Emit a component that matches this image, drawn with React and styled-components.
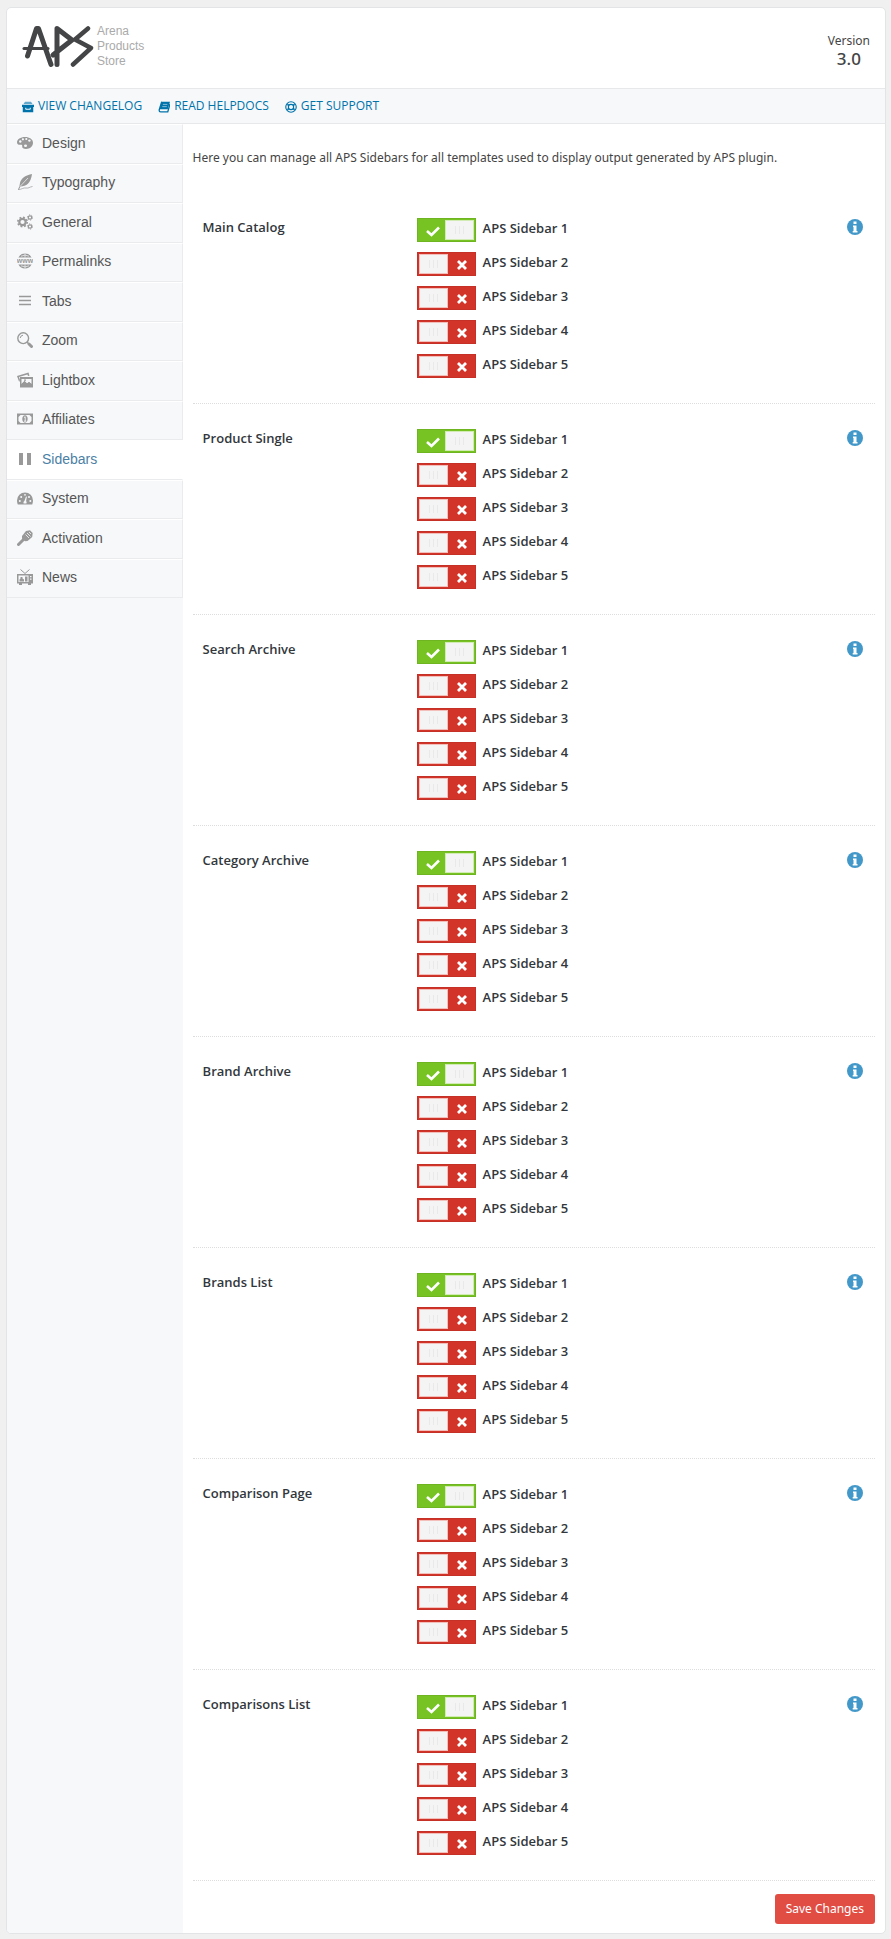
import React, { useState } from "react";
import styled, { createGlobalStyle, css } from "styled-components";

const GlobalStyle = createGlobalStyle`
  * {
    box-sizing: border-box;
  }
  body {
    margin: 0;
    background: #f0f0f0;
    color: #444;
    font-family: "Noto Sans", "Open Sans", sans-serif;
    font-size: 12px;
    line-height: 20px;
  }
`;

const Panel = styled.div`
  margin: 7px 5px 5px 6px;
  background: #fff;
  border: 1px solid #e2e4e6;
  border-radius: 5px;
  overflow: hidden;
`;

const Header = styled.header`
  display: flex;
  justify-content: space-between;
  align-items: flex-start;
  height: 81px;
  padding: 16px 15px 0;
  border-bottom: 1px solid #e6e8ea;
`;

const Brand = styled.div`
  display: flex;
  gap: 2px;
`;

const BrandName = styled.div`
  color: #aaa;
  font: 12px/15px "Liberation Sans", Arial, sans-serif;
`;

const Version = styled.div`
  padding-top: 7px;
  text-align: center;
`;

const VersionNumber = styled.strong`
  display: block;
  font-size: 17px;
  font-weight: 500;
  line-height: 16px;
`;

const TopNav = styled.nav`
  display: flex;
  align-items: center;
  gap: 16px;
  height: 35px;
  padding: 0 15px;
  background: #f6f8fa;
  border-bottom: 1px solid #e6e8ea;
`;

const TopLink = styled.a`
  display: flex;
  align-items: center;
  gap: 4px;
  color: #0073aa;
  font-family: "Open Sans", sans-serif;
  text-decoration: none;
  text-transform: uppercase;

  svg {
    width: 12px;
    height: 12px;
    margin-top: 2px;
  }
`;

const Body = styled.div`
  display: flex;
`;

const Sidebar = styled.aside`
  flex: 0 0 20%;
  background: #f6f8fa;
`;

const Menu = styled.ul`
  display: grid;
  grid-auto-rows: 1fr;
  min-height: 474px;
  margin: 0;
  padding: 0;
  list-style: none;
`;

const MenuItem = styled.li`
  display: flex;
  border-top: 1px solid #fff;
  border-bottom: 1px solid #e9ebed;
  border-right: 1px solid #e9ebed;
  ${({ $active }) => $active && css`
    background: #fff;
    border-right-color: #fff;
  `}
`;

const MenuLink = styled.a`
  flex: 1;
  display: flex;
  align-items: center;
  gap: 9px;
  padding: 0 10px 2px;
  color: ${({ $active }) => ($active ? "#4b7fa5" : "#555")};
  font: 14px/18px "Liberation Sans", Arial, sans-serif;
  text-decoration: none;

  svg {
    width: 16px;
    height: 16px;
    color: #999;
  }
`;

const Content = styled.form`
  flex: 1;
  min-width: 0;
  padding: 24px 10px 9px;
`;

const Intro = styled.p`
  margin: 0 0 25px;
`;

const Section = styled.fieldset`
  display: grid;
  grid-template-columns: 214px 1fr auto;
  align-items: start;
  margin: 0;
  padding: 25px 12px 25px 10px;
  border: 0;
  border-bottom: 1px dotted #ddd;
`;

const SectionTitle = styled.h3`
  margin: 0;
  color: #32373c;
  font-family: "Open Sans", sans-serif;
  font-size: 13px;
  font-weight: 600;
  line-height: 18px;
`;

const Options = styled.div`
  display: grid;
  gap: 10px;
`;

const Option = styled.label`
  display: flex;
  gap: 7px;
  height: 24px;
  justify-self: start;
  color: #32373c;
  font-family: "Open Sans", sans-serif;
  font-size: 13px;
  font-weight: 600;
  cursor: pointer;
`;

const Checkbox = styled.input`
  position: absolute;
  opacity: 0;
  margin: 0;
`;

const Track = styled.span`
  display: flex;
  flex-direction: ${({ $on }) => ($on ? "row-reverse" : "row")};
  width: 59px;
  height: 24px;
  padding: 1px;
  border: 1px solid ${({ $on }) => ($on ? "#6fb522" : "#c63127")};
  background: ${({ $on }) => ($on ? "#76c323" : "#d3342a")};

  input:focus-visible + & {
    outline: 2px solid #5b9dd9;
  }
`;

const Knob = styled.span`
  display: flex;
  justify-content: center;
  align-items: center;
  gap: 3px;
  width: 29px;
  border: 1px solid ${({ $on }) => ($on ? "#d2ebb4" : "#f2bfbb")};
  background: #f4f4f4;
`;

const Grip = styled.i`
  width: 1px;
  height: 8px;
  background: #e9e9e9;
`;

const Mark = styled.span`
  flex: 1;
  display: flex;
  justify-content: center;
  align-items: center;
  padding-top: 2px;
  padding-left: 2px;
`;

const InfoButton = styled.button`
  width: 16px;
  height: 16px;
  margin-top: 1px;
  padding: 0;
  border: 0;
  background: none;
  cursor: pointer;

  svg {
    display: block;
  }
`;

const Actions = styled.div`
  display: flex;
  justify-content: flex-end;
  padding-top: 13px;
`;

const SaveButton = styled.button`
  height: 30px;
  padding: 0 11px;
  border: 0;
  border-radius: 3px;
  background: #e14d43;
  color: #fff;
  font: inherit;
  cursor: pointer;
`;

const Svg = ({ children, ...rest }) => (
  <svg width="16" height="16" viewBox="0 0 16 16" fill="currentColor" aria-hidden="true" {...rest}>
    {children}
  </svg>
);

const Logo = () => (
  <svg width="73" height="43" viewBox="0 0 73 43" fill="none" stroke="#444547" strokeWidth="5" strokeLinecap="round" strokeLinejoin="round" role="img" aria-label="APS">
    <path d="M5.500 32 L14.500 4.500 H16.500 L29 40.500" />
    <path d="M2 24.500H26" strokeWidth="3" />
    <path d="M35 40.500V4.500L50 16L31 31" />
    <path d="M66 4.500L53 15.500L69 24L51 40.500" strokeWidth="4.500" />
  </svg>
);

const BoxIcon = () => (
  <Svg>
    <path d="M4 1h8l2 3H2z" opacity=".6" />
    <path d="M0 5h16v3H0zM1 8h14v7H1z" />
    <path d="M5 9v2h6V9" fill="none" stroke="#fff" strokeWidth="1.300" />
  </Svg>
);

const BookIcon = () => (
  <Svg>
    <path d="M5 1h11l-3 10H2z" />
    <path d="M5 1 1.500 12q0 2.500 2 2.500H13L16 4" fill="none" stroke="currentColor" strokeWidth="1.800" />
    <path d="M6.500 4.500h6M5.700 7.500h6" stroke="#fff" strokeWidth="1" opacity=".7" />
  </Svg>
);

const LifebuoyIcon = () => (
  <Svg fill="none" stroke="currentColor">
    <circle cx="8" cy="8" r="7" strokeWidth="1.500" />
    <circle cx="8" cy="8" r="3.500" strokeWidth="1.500" />
    <path d="m3 4.500 2.500 1.500M3 11.500l2.500-1.500M13 4.500 10.500 6M13 11.500 10.500 10" strokeWidth="2" />
  </Svg>
);

const PaletteIcon = () => (
  <Svg>
    <path d="M8 2C3.500 2 0 4.300 0 7.200c0 2 1.800 2.900 3.300 2.600 1.500-.3 2.200.2 1.900 1.500C4.900 13 6.500 14 9 14c4 0 7-2.500 7-6.200C16 4.200 12.500 2 8 2z" />
    <g fill="#f6f8fa">
      <circle cx="3.300" cy="6.500" r="1.200" />
      <circle cx="5.900" cy="4.300" r="1.100" />
      <circle cx="9.300" cy="4" r="1.100" />
      <circle cx="12.400" cy="5.600" r="1.200" />
      <ellipse cx="8.500" cy="10.800" rx="1.500" ry="1.300" />
    </g>
  </Svg>
);

const CogsIcon = () => (
  <Svg fill="none" stroke="currentColor">
    <circle cx="5.500" cy="8" r="3.200" strokeWidth="2.200" />
    <circle cx="5.500" cy="8" r="4.700" strokeWidth="1.600" strokeDasharray="1.850 1.840" />
    <circle cx="13" cy="3.500" r="1.700" strokeWidth="1.200" />
    <circle cx="13" cy="3.500" r="2.600" strokeWidth="1" strokeDasharray="1.200 1.520" />
    <circle cx="13" cy="12.500" r="1.700" strokeWidth="1.200" />
    <circle cx="13" cy="12.500" r="2.600" strokeWidth="1" strokeDasharray="1.200 1.520" />
  </Svg>
);

const GaugeIcon = () => (
  <Svg>
    <path d="M8 2.500a8 8 0 0 0-8 8c0 1.600.3 2.700.8 4h14.400c.5-1.300.8-2.400.8-4a8 8 0 0 0-8-8z" />
    <g fill="#f6f8fa">
      <circle cx="2.800" cy="11" r="1" />
      <circle cx="4.200" cy="7" r="1" />
      <circle cx="8" cy="4.800" r=".9" />
      <circle cx="12" cy="7" r="1" />
      <circle cx="13.300" cy="11" r="1" />
      <path d="m9 6.500.9.300-.8 4.200q1 1 .3 2.500H6.600q-.7-1.800.9-2.700z" />
    </g>
  </Svg>
);

const QuillIcon = () => (
  <Svg>
    <path d="M15 0C9 1 4 4 3 9l-.6 3.300L1 15.500l.8.2 1.700-3.200C9 12.500 14 9 15 0z" />
    <path d="M3 12.500 11 4" stroke="#f6f8fa" strokeWidth=".7" />
    <path d="M1 15.700c4-.2 5-2.200 8-1.700s3-1 6.500-1.500" fill="none" stroke="currentColor" strokeWidth=".7" />
  </Svg>
);

const WwwIcon = () => (
  <Svg>
    <path d="M1.400 4.500a7.500 7.500 0 0 1 13.200 0zM1.400 11.500a7.500 7.500 0 0 0 13.200 0z" />
    <path d="M4 3.200Q8 1 12 3.200M4 12.800Q8 15 12 12.800M8 .5v4M8 11.500v4" stroke="#f6f8fa" strokeWidth=".7" fill="none" />
    <text x="8" y="10" fontSize="7" fontWeight="700" fontFamily="Liberation Sans" textAnchor="middle">www</text>
  </Svg>
);

const MenuIcon = () => (
  <Svg>
    <path d="M2 3.500h12M2 7.500h12M2 11.500h12" stroke="currentColor" strokeWidth="1.500" />
  </Svg>
);

const SearchIcon = () => (
  <Svg fill="none" stroke="currentColor">
    <circle cx="6.200" cy="6.200" r="5.400" strokeWidth="1.400" />
    <path d="M3.200 6Q3.500 3.500 6 3.200" />
    <path d="m10 10 1.500 1.500" strokeWidth="1.500" />
    <path d="m12 12 2.500 2.500" strokeWidth="3" strokeLinecap="round" />
  </Svg>
);

const ImagesIcon = () => (
  <Svg>
    <path d="M0 4 11.500.5l1 3.200-1.500.3-.6-1.500L2 5l1 3-.8 2z" />
    <path d="M3 5h13v10.500H3zM4.500 7v5l3-3 2.500 2.500 2-1.500 2.500 2V7z" fillRule="evenodd" />
    <path d="M7 7.500h2v1.300H7zM4.500 12l3-3 2.500 2.500 2-1.500 2.500 2v2h-10z" />
  </Svg>
);

const MoneyIcon = () => (
  <Svg>
    <path d="M0 2.500h16v11H0zM3.500 4 1.500 6v4l2 2h9l2-2V6l-2-2z" fillRule="evenodd" />
    <path d="M8 4.300c3.600 0 3.600 7.400 0 7.400s-3.600-7.400 0-7.400z" />
    <path d="M7 6.500 8.200 5.800v4.400M7 10.200h2.300" fill="none" stroke="#f6f8fa" strokeWidth=".9" />
  </Svg>
);

const PauseIcon = () => (
  <Svg>
    <path d="M2 2h4v12H2zM10 2h4v12h-4z" />
  </Svg>
);

const KeyIcon = () => (
  <Svg>
    <path d="m1.500 14.500 6-6" stroke="currentColor" strokeWidth="3" strokeLinecap="round" />
    <path d="M5 6 9 1 13 .3 15.700 3l-.5 4-4.700 4-2.500.300L5 8.500z" />
    <path d="M8.500 4.500 12 8M10 3l3.500 3.500M12 2l2 2" stroke="#f6f8fa" strokeWidth=".8" />
  </Svg>
);

const TvIcon = () => (
  <Svg>
    <path d="m3.500.5 4.500 4 4.500-4" fill="none" stroke="currentColor" />
    <path d="M0 5h16v9.500H0zM1.500 6.500V13h10V6.500zM13 7v1.200h1.500V7zm0 2.500v1.200h1.500V9.500z" fillRule="evenodd" />
    <path d="M2.500 12.500v-2l1-1V8h2v1.500l1.500 1v2zM8 7.500h2.500v5H8zM2 14h3v2H2zM11 14h3v2h-3z" />
  </Svg>
);

const InfoIcon = () => (
  <Svg>
    <circle cx="8" cy="8" r="8" fill="#4298c9" />
    <path d="M6.500 2.500h3v2.500h-3zM6 6.500h3.500V12h1v1.500H5.700V12h.8V8H6z" fill="#fff" />
  </Svg>
);

const CheckMark = () => (
  <svg width="14" height="11" viewBox="0 0 14 11" fill="none" stroke="#fff" strokeWidth="2.600" aria-hidden="true">
    <path d="M1 5 5.500 9 13 1.500" />
  </svg>
);

const CrossMark = () => (
  <svg width="10" height="10" viewBox="0 0 10 10" stroke="#fff" strokeWidth="2.800" aria-hidden="true">
    <path d="m1 1 8 8M9 1 1 9" />
  </svg>
);

const topLinks = [
  { label: "View Changelog", icon: BoxIcon },
  { label: "Read Helpdocs", icon: BookIcon },
  { label: "Get Support", icon: LifebuoyIcon },
];

const menu = [
  { label: "Design", icon: PaletteIcon },
  { label: "Typography", icon: QuillIcon },
  { label: "General", icon: CogsIcon },
  { label: "Permalinks", icon: WwwIcon },
  { label: "Tabs", icon: MenuIcon },
  { label: "Zoom", icon: SearchIcon },
  { label: "Lightbox", icon: ImagesIcon },
  { label: "Affiliates", icon: MoneyIcon },
  { label: "Sidebars", icon: PauseIcon, active: true },
  { label: "System", icon: GaugeIcon },
  { label: "Activation", icon: KeyIcon },
  { label: "News", icon: TvIcon },
];

const sections = [
  "Main Catalog",
  "Product Single",
  "Search Archive",
  "Category Archive",
  "Brand Archive",
  "Brands List",
  "Comparison Page",
  "Comparisons List",
];

const Toggle = ({ label, defaultOn }) => {
  const [on, setOn] = useState(defaultOn);
  return (
    <Option>
      <Checkbox type="checkbox" checked={on} onChange={() => setOn(!on)} />
      <Track $on={on}>
        <Knob $on={on}>
          <Grip />
          <Grip />
          <Grip />
        </Knob>
        <Mark>{on ? <CheckMark /> : <CrossMark />}</Mark>
      </Track>
      {label}
    </Option>
  );
};

const App = () => (
  <>
    <GlobalStyle />
    <Panel>
      <Header>
        <Brand>
          <Logo />
          <BrandName>
            Arena
            <br />
            Products
            <br />
            Store
          </BrandName>
        </Brand>
        <Version>
          Version
          <VersionNumber>3.0</VersionNumber>
        </Version>
      </Header>
      <TopNav>
        {topLinks.map(({ label, icon: Icon }) => (
          <TopLink href="#" key={label}>
            <Icon />
            {label}
          </TopLink>
        ))}
      </TopNav>
      <Body>
        <Sidebar>
          <Menu>
            {menu.map(({ label, icon: Icon, active }) => (
              <MenuItem key={label} $active={active}>
                <MenuLink href="#" $active={active}>
                  <Icon />
                  {label}
                </MenuLink>
              </MenuItem>
            ))}
          </Menu>
        </Sidebar>
        <Content onSubmit={(e) => e.preventDefault()}>
          <Intro>
            Here you can manage all APS Sidebars for all templates used to display output generated by APS plugin.
          </Intro>
          {sections.map((title) => (
            <Section key={title} aria-label={title}>
              <SectionTitle>{title}</SectionTitle>
              <Options>
                {[1, 2, 3, 4, 5].map((n) => (
                  <Toggle key={n} label={`APS Sidebar ${n}`} defaultOn={n === 1} />
                ))}
              </Options>
              <InfoButton type="button" aria-label={`About ${title}`}>
                <InfoIcon />
              </InfoButton>
            </Section>
          ))}
          <Actions>
            <SaveButton type="submit">Save Changes</SaveButton>
          </Actions>
        </Content>
      </Body>
    </Panel>
  </>
);

export default App;
